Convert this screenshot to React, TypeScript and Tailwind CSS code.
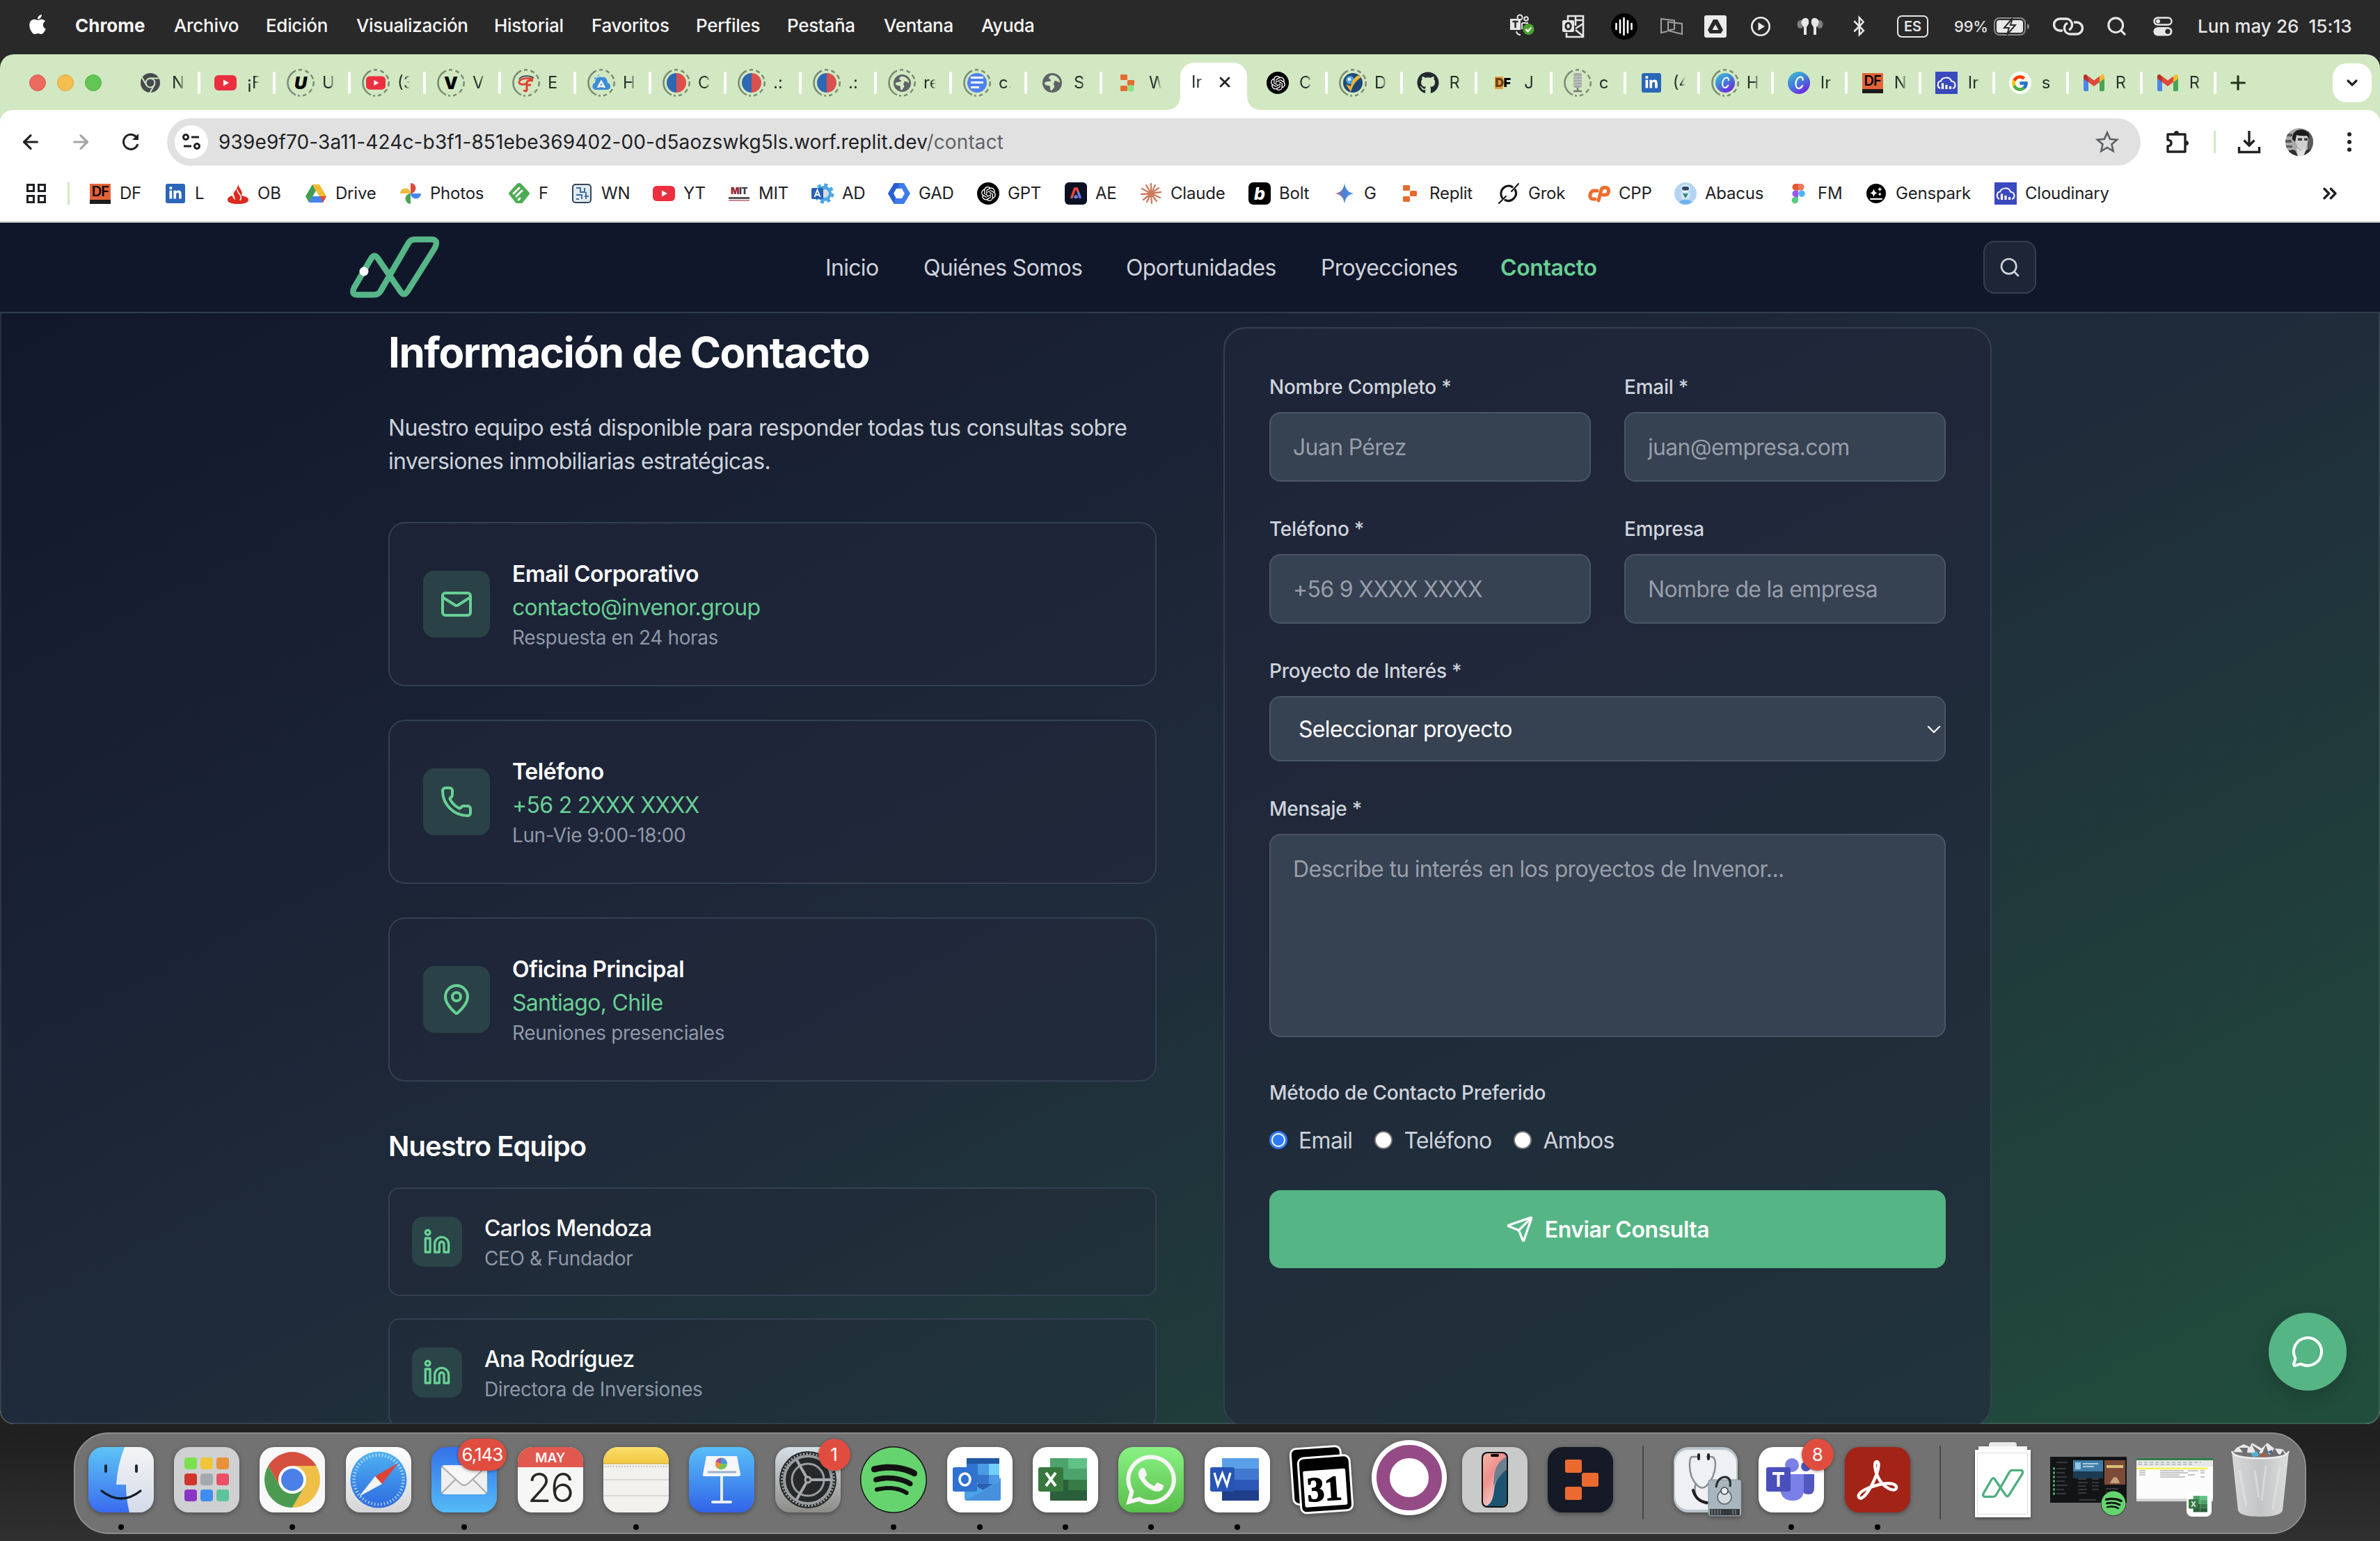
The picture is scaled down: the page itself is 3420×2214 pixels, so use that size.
import React from "react";
import type { ReactNode } from "react";
import {
  ArrowLeft,
  ArrowRight,
  ChevronDown,
  ChevronsRight,
  Linkedin,
  Mail,
  MapPin,
  MessageCircle,
  Phone,
  Plus,
  Search,
  Send,
  X,
} from "lucide-react";
import { FaApple, FaBluetoothB, FaGithub, FaLinkedinIn, FaSpotify, FaWhatsapp } from "react-icons/fa";
import { SiOpenai } from "react-icons/si";
import { FcGoogle } from "react-icons/fc";

/* ---------- brand ---------- */

const LOGO_PATH =
  "M35 84.5H12Q2 84.5 7 74L31 33Q36 24 41.500 33L73 79Q78.500 88 84 79L123 17Q128.500 5 118 5H94Q88 5 85 10L45 79Q42 84.500 35 84.500Z";

function InvenorLogo({ className, stroke = 8.5, dot = true, color = "#56b688" }: { className: string; stroke?: number; dot?: boolean; color?: string }) {
  return (
    <svg viewBox="0 0 130 90" className={className} fill="none">
      <path d={LOGO_PATH} stroke={color} strokeWidth={stroke} strokeLinejoin="round" />
      {dot && <circle cx="21" cy="51" r="6.5" fill="#fff" />}
    </svg>
  );
}

/* ---------- favicons ---------- */

const YouTubeIcon = ({ small = false }: { small?: boolean }) => (
  <svg viewBox="0 0 32 32" className={small ? "size-7" : "size-8"}>
    <rect y="5" width="32" height="22" rx="6" fill="#ec2f3f" />
    <path d="M13 11.500v9l8-4.500z" fill="#fff" />
  </svg>
);
const ChromeGrey = () => (
  <svg viewBox="0 0 28 28" className="size-7">
    <circle cx="14" cy="14" r="14" fill="#474b50" />
    <circle cx="14" cy="14" r="6.500" fill="#474b50" stroke="#d2e8c2" strokeWidth="2" />
    <path d="M14 7.500h12.500M8.400 17.300 2.200 6.600M19.600 17.300 13.500 28" stroke="#d2e8c2" strokeWidth="2" />
  </svg>
);
const GlobeIcon = ({ small = false }: { small?: boolean }) => (
  <svg viewBox="0 0 28 28" className={small ? "size-[25px]" : "size-7"}>
    <circle cx="14" cy="14" r="14" fill="#5f6368" />
    <path d="M13 3c-4 1-5 5-2 6 3 1 0 3-2 3-3 0-6 1-6 2 0 3 3 4 6 4 2 0 2 2 2 4 0 3 2 3 3 3 0-2 3-3 3-6s-2-3-1-4c2-2 0-3 2-4 3 0 5 2 7 3 0-5-4-11-12-11z" fill="#d2e8c2" />
  </svg>
);
const HalfIcon = () => (
  <svg viewBox="0 0 28 28" className="size-7">
    <path d="M14 0a14 14 0 0 0 0 28z" fill="#2d68b2" />
    <path d="M14 0a14 14 0 0 1 0 28z" fill="#dc4f4c" />
  </svg>
);
const DocsCircle = () => (
  <svg viewBox="0 0 28 28" className="size-7">
    <circle cx="14" cy="14" r="14" fill="#4f81ee" />
    <path d="M5 6.500h18M5 13.500h18M5 20.500h12" stroke="#fff" strokeWidth="3" />
  </svg>
);
const ReplitIcon = ({ dot = false }: { dot?: boolean }) => (
  <svg viewBox="0 0 32 32" className="size-8">
    <rect x="6" y="4" width="10" height="8" rx="1.500" fill="#e56b2f" />
    <rect x="16" y="12" width="10" height="8" rx="1.500" fill="#e56b2f" />
    <rect x="6" y="20" width="10" height="8" rx="1.500" fill="#e56b2f" />
    {dot && <circle cx="21" cy="24" r="5" fill="#8be08c" />}
  </svg>
);
const OpenAiIcon = () => (
  <span className="flex size-8 items-center justify-center rounded-full bg-black text-white">
    <SiOpenai size={21} />
  </span>
);
const DfIcon = () => (
  <span className="flex h-[29px] w-[30px] flex-col items-center bg-[#e4643a]">
    <span className="text-[20px] leading-[23px] font-semibold tracking-[-0.04em] text-black">DF</span>
    <span className="h-[6px] w-full bg-[#1d1b1b]" />
  </span>
);
const DfSmall = () => (
  <span className="flex text-[18px] leading-[18px] font-black tracking-[-0.05em]">
    <span className="bg-[#e3a044] text-[#6b3f10]">D</span>
    <span>F</span>
  </span>
);
const LinkedInIcon = () => (
  <span className="flex size-7 items-center justify-center rounded-[3px] bg-[#2a66b8] text-white">
    <FaLinkedinIn size={20} />
  </span>
);
const CanvaIcon = ({ small = false }: { small?: boolean }) => (
  <svg viewBox="0 0 32 32" className={small ? "size-7" : "size-8"}>
    <defs>
      <linearGradient id="canva" x1="0" y1="0" x2=".6" y2="1">
        <stop offset="0" stopColor="#3fc4cf" />
        <stop offset=".5" stopColor="#3f86dc" />
        <stop offset="1" stopColor="#6d2be0" />
      </linearGradient>
    </defs>
    <circle cx="16" cy="16" r="16" fill="url(#canva)" />
    <path d="M21.500 12c.5-3-1-4.500-3-4.500-4 0-7 5-7 10 0 4 2 6.500 4.500 6.500s4-2 5-4" stroke="#fff" strokeWidth="2.200" fill="none" strokeLinecap="round" />
  </svg>
);
const CloudinaryIcon = () => (
  <svg viewBox="0 0 32 32" className="size-8">
    <rect width="32" height="32" fill="#3a49be" />
    <path d="M7 24c-5-2-4-10 1-10.500 1.500-6 13-7 15 0 7 1 7 9 2 10.500" stroke="#fff" strokeWidth="2" fill="none" />
    <path d="M10.500 16.500v8.500M16 19v6M21.500 21v4" stroke="#fff" strokeWidth="3.200" />
  </svg>
);
const GmailIcon = () => (
  <svg viewBox="0 0 30 24" className="h-6 w-[30px]">
    <path d="M0 3v19a2 2 0 0 0 2 2h5V8z" fill="#4b84ec" />
    <path d="M30 3v19a2 2 0 0 1-2 2h-5V8z" fill="#48a455" />
    <path d="M23 3.500V11l7-5V3c0-3-3-4-5-2z" fill="#f2bd2e" />
    <path d="M7 3.500V11L0 6V3c0-3 3-4 5-2z" fill="#b83329" />
    <path d="M7 2.500V11l8 6 8-6V2.500l-8 6z" fill="#dd4a3d" />
  </svg>
);
const GoogleIcon = () => (
  <span className="flex size-8 items-center justify-center rounded-full bg-white">
    <FcGoogle size={27} />
  </span>
);
const MicIcon = () => (
  <svg viewBox="0 0 20 28" className="h-7 w-5">
    <rect x="4" y="0" width="12" height="21" rx="3" fill="#a4a8a4" />
    <path d="M4 5h12M4 9h12M4 13h12M4 17h12" stroke="#d9dcd6" strokeWidth="1.200" />
    <path d="M10 21v4M4 26h12" stroke="#777" strokeWidth="2.500" />
  </svg>
);
const SwirlIcon = () => (
  <svg viewBox="0 0 28 28" className="size-7">
    <circle cx="14" cy="14" r="14" fill="#1e4873" />
    <circle cx="10" cy="10" r="6" fill="#4a9fdc" />
    <circle cx="9" cy="9" r="2.500" fill="#d8f0ff" />
    <path d="M4 16l7 11c3-9 6-15 15-21-2-2-4-3-6-2-5 4-8 8-9 15z" fill="#eeb23c" />
  </svg>
);
const CloudBlue = () => (
  <svg viewBox="0 0 28 28" className="size-7">
    <path d="M6 24c-6 0-6-9-1-10C5 7 11 4 15 6c5-1 8 3 8 8 6 1 5 10 0 10z" fill="#3f8bd8" />
    <path d="M4 6h3v3H4zM9 2h2v2H9zM8 5h2v2H8z" fill="#69b0ea" />
    <path d="M9 21 14 12l5 9M11 19h7" stroke="#fff" strokeWidth="2.500" fill="none" />
  </svg>
);
const RedF = () => (
  <svg viewBox="0 0 28 28" className="size-7" fill="none">
    <path d="M4 9C8 3 18 3 25 7" stroke="#43505a" strokeWidth="2" />
    <path d="M24 9C16 6 5 8 4 13c0 4 7 4 10 2" stroke="#e0402f" strokeWidth="2.800" />
    <path d="M24 11c-5-1-9 0-9 3v11c-2 2-4 0-4-1M14 17h7" stroke="#e0402f" strokeWidth="3" />
  </svg>
);
const BoldU = () => <span className="text-[25px] leading-none font-black text-black italic">U</span>;
const BoldV = () => <span className="text-[25px] leading-none font-black text-black">V</span>;

/* ---------- tab strip ---------- */

function Ring({ children }: { children: ReactNode }) {
  return (
    <span className="relative flex size-10 items-center justify-center">
      <svg viewBox="0 0 40 40" className="absolute inset-0 size-10" fill="none">
        <path d="M13 2.700A18.700 18.700 0 0 0 13 37.300" stroke="#7b8c74" strokeWidth="2.500" />
        <path
          d="M17 1.500a18.700 18.700 0 0 1 5-.1M26.500 2.500a18.700 18.700 0 0 1 5 3M34.500 8.500a18.700 18.700 0 0 1 3.500 6M38.600 18a18.700 18.700 0 0 1-.6 7M36 29a18.700 18.700 0 0 1-4 5M28 36.500a18.700 18.700 0 0 1-5 2M19 38.700a18.700 18.700 0 0 1-3-.4"
          stroke="#7b8c74"
          strokeWidth="2.500"
        />
      </svg>
      {children}
    </span>
  );
}

type TabItem = { icon: ReactNode; text: string; ring?: boolean };

const leftTabs: TabItem[] = [
  { icon: <ChromeGrey />, text: "N" },
  { icon: <YouTubeIcon />, text: "¡F" },
  { icon: <BoldU />, text: "U", ring: true },
  { icon: <YouTubeIcon small />, text: "(3", ring: true },
  { icon: <BoldV />, text: "V", ring: true },
  { icon: <RedF />, text: "E", ring: true },
  { icon: <CloudBlue />, text: "H", ring: true },
  { icon: <HalfIcon />, text: "C", ring: true },
  { icon: <HalfIcon />, text: ".:", ring: true },
  { icon: <HalfIcon />, text: ".:", ring: true },
  { icon: <GlobeIcon small />, text: "re", ring: true },
  { icon: <DocsCircle />, text: "c.", ring: true },
  { icon: <GlobeIcon />, text: "S" },
  { icon: <ReplitIcon dot />, text: "W" },
];

const rightTabs: TabItem[] = [
  { icon: <OpenAiIcon />, text: "C" },
  { icon: <SwirlIcon />, text: "D", ring: true },
  { icon: <FaGithub size={32} color="#24292f" />, text: "R" },
  { icon: <DfSmall />, text: "J" },
  { icon: <MicIcon />, text: "c", ring: true },
  { icon: <LinkedInIcon />, text: "(4" },
  { icon: <CanvaIcon small />, text: "H", ring: true },
  { icon: <CanvaIcon />, text: "Ir" },
  { icon: <DfIcon />, text: "N" },
  { icon: <CloudinaryIcon />, text: "Ir" },
  { icon: <GoogleIcon />, text: "s" },
  { icon: <GmailIcon />, text: "R" },
  { icon: <GmailIcon />, text: "R" },
];

function Tab({ tab, width, divider }: { tab: TabItem; width: string; divider: boolean }) {
  return (
    <div className={`flex h-full shrink-0 items-center pl-[18px] ${width}`}>
      <span className="flex size-10 shrink-0 items-center justify-center">{tab.ring ? <Ring>{tab.icon}</Ring> : tab.icon}</span>
      <span className="ml-[11px] w-[18px] overflow-hidden mask-r-from-60% text-[24px] leading-8 whitespace-nowrap text-[#26302a]">{tab.text}</span>
      {divider && <span className="-mr-0.5 ml-auto h-8 w-1 rounded-sm bg-white" />}
    </div>
  );
}

function TabStrip() {
  return (
    <div className="flex h-20 shrink-0 items-center pt-0.5">
      <div className="flex w-[178px] shrink-0 gap-4 pl-[42px]">
        <span className="size-6 rounded-full border border-[#d65a50] bg-[#ed6a5f]" />
        <span className="size-6 rounded-full border border-[#dca73c] bg-[#f4bf4f]" />
        <span className="size-6 rounded-full border border-[#53b146] bg-[#62c554]" />
      </div>
      {leftTabs.map((t, i) => (
        <Tab key={i} tab={t} width="w-[108px]" divider={i < 13} />
      ))}
      <div className="relative ml-1.5 flex h-[68px] w-24 shrink-0 items-center self-end rounded-t-[20px] bg-white pb-3">
        <svg viewBox="0 0 22 22" className="absolute bottom-0 -left-[22px] size-[22px]">
          <path d="M22 0v22H0Q22 22 22 0z" fill="#fff" />
        </svg>
        <svg viewBox="0 0 22 22" className="absolute -right-[22px] bottom-0 size-[22px]">
          <path d="M0 0v22h22Q0 22 0 0z" fill="#fff" />
        </svg>
        <span className="ml-4 w-[18px] overflow-hidden mask-r-from-60% text-[24px] leading-8 whitespace-nowrap text-[#26302a]">Ir</span>
        <X className="ml-[18px] size-6 text-[#202124]" strokeWidth={2.8} />
      </div>
      <div className="w-1.5 shrink-0" />
      {rightTabs.map((t, i) => (
        <Tab key={i} tab={t} width={i === 0 ? "w-[108px]" : i < 4 ? "w-[107.600px]" : "w-[106px]"} divider />
      ))}
      <Plus className="ml-[17px] size-[32px] text-[#27331f]" strokeWidth={2.400} />
      <div className="mr-3 ml-auto flex size-14 items-center justify-center rounded-[20px] bg-white">
        <ChevronDown className="size-6 text-[#1f2421]" strokeWidth={3.200} />
      </div>
    </div>
  );
}

/* ---------- toolbar ---------- */

function Toolbar() {
  return (
    <div className="flex h-[92px] shrink-0 items-center text-[#202124]">
      <div className="flex w-60 shrink-0 items-center pl-[28px]">
        <ArrowLeft className="size-8" strokeWidth={2.400} />
        <ArrowRight className="ml-10 size-8 text-[#a3a5a7]" strokeWidth={2.400} />
        <svg viewBox="0 0 28 28" className="ml-[42px] size-7" fill="none">
          <path d="M24 17A10.500 10.500 0 1 1 21.500 6.500L24 9" stroke="#202124" strokeWidth="3" />
          <path d="M25 2v9h-9z" fill="#202124" />
        </svg>
      </div>
      <div className="flex h-[68px] w-[2836px] shrink-0 items-center rounded-full bg-[#e1e1e1] pl-[11px]">
        <span className="flex size-12 items-center justify-center rounded-full bg-white">
          <svg viewBox="0 0 28 28" className="size-7" fill="none" stroke="#202124" strokeWidth="3">
            <circle cx="6" cy="7" r="3.500" />
            <path d="M14 7h11M3 20h11" />
            <circle cx="22" cy="20" r="3.500" />
          </svg>
        </span>
        <span className="ml-[15px] text-[28px] leading-9 tracking-[0.005em] text-[#202124]">
          939e9f70-3a11-424c-b3f1-851ebe369402-00-d5aozswkg5ls.worf.replit.dev<span className="text-[#5f6368]">/contact</span>
        </span>
        <svg viewBox="0 0 24 24" className="mr-[30px] ml-auto size-9" fill="none" stroke="#5c5f63" strokeWidth="1.700">
          <path d="m12 3 2.700 6.200 6.700.6-5.100 4.400 1.500 6.600L12 17.300l-5.800 3.500 1.500-6.600-5.100-4.400 6.700-.6z" />
        </svg>
      </div>
      <svg viewBox="0 0 34 34" className="ml-[36px] size-[34px]" fill="none" stroke="#202124" strokeWidth="3.400" strokeLinejoin="round">
        <path d="M3 6h25v25H3v-8q5-.5 5-4.500T3 14z" />
        <path d="M12 5q0-4 3.500-4T19 5zM29 15q4 0 4 3.500T29 22z" fill="#202124" stroke="none" />
      </svg>
      <span className="ml-[35px] h-8 w-[3px] bg-[#d2e8c2]" />
      <svg viewBox="0 0 34 34" className="ml-[31px] size-[34px]" fill="none" stroke="#202124" strokeWidth="3.400">
        <path d="M17 1v20M9.500 14.500 17 22l7.500-7.500M2.500 24v7.500h29V24" />
      </svg>
      <svg viewBox="0 0 40 40" className="ml-[35px] size-10">
        <defs>
          <clipPath id="avatar">
            <circle cx="20" cy="20" r="20" />
          </clipPath>
        </defs>
        <g clipPath="url(#avatar)">
          <rect width="40" height="40" fill="#a9a9a9" />
          <path d="M0 8h10v4H0zM0 17h9v4H0zM0 25h10v3H0zM32 4h8v30h-8z" fill="#5a5a5a" />
          <path d="M0 34q10-4 14-2l4 8H0zM40 30q-8 0-10 2l-4 8h14z" fill="#2e2e2e" />
          <path d="M12 12q1-8 12-8 10 2 9 12l-3 13q-4 5-9 2-6-6-9-19z" fill="#cfcfcf" />
          <path d="M10 16Q10 2 24 2q13 2 10 14l-3-5q-9 1-15-1l-2 10z" fill="#1b1b1b" />
          <path d="M18 14.500h6v3.500h-6zM27 14.500h5v3.500h-5z" fill="#3a3a3a" />
          <path d="m16 28 6 5 8-5-4 12h-8z" fill="#e2e2e2" />
        </g>
      </svg>
      <div className="ml-[49px] flex flex-col gap-[5px]">
        <span className="size-1.5 rounded-full bg-[#202124]" />
        <span className="size-1.5 rounded-full bg-[#202124]" />
        <span className="size-1.5 rounded-full bg-[#202124]" />
      </div>
    </div>
  );
}

/* ---------- bookmarks ---------- */

const bookmarks: { icon: ReactNode; text: string; w: string }[] = [
  { icon: <DfIcon />, text: "DF", w: "w-[108px]" },
  { icon: <LinkedInIcon />, text: "L", w: "w-[90px]" },
  {
    icon: (
      <svg viewBox="0 0 32 32" className="size-8">
        <path d="M17 1c-1 3 0 5 2 8s4 6 2 10c6 1 10 3 10 6 0 4-6 6-15 6S1 29 1 25c0-3 3-5 7-6 0 3 2 4 4 6 0-4-3-6-2-10 1-3 4-3 7-14z" fill="#dc2a1e" />
        <path d="M15 10c-1 4 4 6 5 10 1 2 0 4-1 6" stroke="#fff" strokeWidth="1.500" fill="none" />
      </svg>
    ),
    text: "OB",
    w: "w-[112px]",
  },
  {
    icon: (
      <svg viewBox="0 0 32 32" className="size-8">
        <path d="M11 3h10l10 17H21z" fill="#f3bb2d" />
        <path d="M11 3 1 20l5 9 10-17z" fill="#439d52" />
        <path d="M11 20h20l-5 9H6z" fill="#4583ee" />
        <path d="M26 29l5-9h-9z" fill="#d94c3d" />
      </svg>
    ),
    text: "Drive",
    w: "w-[136px]",
  },
  {
    icon: (
      <svg viewBox="0 0 32 32" className="size-8">
        <path d="M16 16V1a7.500 7.500 0 0 1 0 15z" fill="#da4b3e" />
        <path d="M16 16h15a7.500 7.500 0 0 1-15 0z" fill="#4b84ee" />
        <path d="M16 16v15a7.500 7.500 0 0 1 0-15z" fill="#4ba457" />
        <path d="M16 16H1a7.500 7.500 0 0 1 15 0z" fill="#f0bb3a" />
      </svg>
    ),
    text: "Photos",
    w: "w-[156px]",
  },
  {
    icon: (
      <svg viewBox="0 0 32 32" className="size-8">
        <path d="M16 1q2 0 3 1l11 12q2 2 0 4L22 28q-1 2-3 2h-6q-2 0-3-2L2 18q-2-2 0-4L13 2q1-1 3-1z" fill="#4dab52" />
        <path d="m8 16 8-8M12 20l8-8M15 25l2-2" stroke="#fff" strokeWidth="3" strokeLinecap="round" />
      </svg>
    ),
    text: "F",
    w: "w-[90px]",
  },
  {
    icon: (
      <svg viewBox="0 0 32 32" className="size-8">
        <rect x="3" y="3" width="26" height="26" rx="4" fill="#e3ebf1" stroke="#33475b" strokeWidth="2" />
        <path d="M8 8h6v6h6V8M8 18h8v6M22 14v10M8 24h4M20 20h6" stroke="#3c6ea0" strokeWidth="2" fill="none" />
      </svg>
    ),
    text: "WN",
    w: "w-[118px]",
  },
  { icon: <YouTubeIcon />, text: "YT", w: "w-[108px]" },
  {
    icon: (
      <span className="flex w-8 flex-col items-center">
        <span className="text-[13px] leading-[13px] font-black tracking-[-0.03em] text-[#3b3b3f]">
          <span className="text-[#97283a]">M</span>IT
        </span>
        <span className="mt-0.5 h-[3px] w-[30px] bg-[#555]" />
        <span className="mt-px h-[2px] w-[30px] bg-[#c58a92]" />
      </span>
    ),
    text: "MIT",
    w: "w-[120px]",
  },
  {
    icon: (
      <svg viewBox="0 0 32 32" className="size-8">
        <circle cx="18" cy="16" r="11" fill="#4aa6e2" />
        <circle cx="18" cy="16" r="12.500" fill="none" stroke="#4aa6e2" strokeWidth="4" strokeDasharray="5 4.800" />
        <circle cx="19" cy="16" r="6" fill="#d8dde2" />
        <rect x="0" y="8" width="17" height="16" rx="2" fill="#2762b8" />
        <path d="m4.500 21 4-10 4 10M6 18h5" stroke="#fff" strokeWidth="2" fill="none" />
      </svg>
    ),
    text: "AD",
    w: "w-[110px]",
  },
  {
    icon: (
      <svg viewBox="0 0 32 32" className="size-8">
        <path d="M9 1h14l9 15-9 15H9L0 16z" fill="#3f7bea" />
        <path d="M9 1h8l-6 15-2 15L0 16z" fill="#2a5fd0" />
        <path d="m12 9 8 0 4 7-4 7h-8l-4-7z" fill="#fff" />
      </svg>
    ),
    text: "GAD",
    w: "w-[128px]",
  },
  { icon: <OpenAiIcon />, text: "GPT", w: "w-[126px]" },
  {
    icon: (
      <svg viewBox="0 0 32 32" className="size-8">
        <defs>
          <linearGradient id="ae" x1="0" y1="0" x2="1" y2="1">
            <stop offset="0" stopColor="#ff4b3a" />
            <stop offset=".4" stopColor="#f0443c" />
            <stop offset=".7" stopColor="#4e8ff0" />
            <stop offset="1" stopColor="#9a4cf0" />
          </linearGradient>
        </defs>
        <rect width="32" height="32" rx="6" fill="#0b1022" />
        <path d="m9.500 23 5-14h3l5 14M14 22.500l2-3 2 3" stroke="url(#ae)" strokeWidth="3.600" fill="none" strokeLinejoin="round" />
      </svg>
    ),
    text: "AE",
    w: "w-[108px]",
  },
  {
    icon: (
      <svg viewBox="0 0 32 32" className="size-8" stroke="#cc7c5e" strokeWidth="2.300" strokeLinecap="round">
        <path d="M16 16V2M16 16l6-12M16 16l11-8M16 16l14-2M16 16l13 6M16 16l8 11M16 16l1 14M16 16l-6 12M16 16 5 25M16 16 2 17M16 16 3 9M16 16 9 4" />
      </svg>
    ),
    text: "Claude",
    w: "w-[156px]",
  },
  {
    icon: (
      <span className="flex size-8 items-center justify-center rounded-[7px] bg-black text-[25px] leading-none font-extrabold text-white italic">b</span>
    ),
    text: "Bolt",
    w: "w-[122px]",
  },
  {
    icon: (
      <svg viewBox="0 0 32 32" className="size-8">
        <defs>
          <linearGradient id="gem" x1="0" y1="0" x2="1" y2="0">
            <stop offset="0" stopColor="#c9667a" />
            <stop offset=".45" stopColor="#4d7fd6" />
            <stop offset="1" stopColor="#3f9be8" />
          </linearGradient>
        </defs>
        <path d="M16 1q1.500 13.500 14 15-12.500 1.500-14 15Q14.500 17.500 2 16 14.500 14.500 16 1z" fill="url(#gem)" />
      </svg>
    ),
    text: "G",
    w: "w-[94px]",
  },
  { icon: <ReplitIcon />, text: "Replit", w: "w-[142px]" },
  {
    icon: (
      <svg viewBox="0 0 32 32" className="size-8" fill="none" stroke="#151515" strokeLinecap="round">
        <path d="M21 6.500A11 11 0 0 0 6.500 22M11 25.500A11 11 0 0 0 25.500 11" strokeWidth="3.200" />
        <path d="M30 2 20 13M12 20 2 30" strokeWidth="2" />
      </svg>
    ),
    text: "Grok",
    w: "w-[130px]",
  },
  {
    icon: (
      <svg viewBox="0 0 32 32" className="size-8" fill="none" stroke="#ec6e31" strokeWidth="5" strokeLinecap="round">
        <path d="M13 12H9q-5 0-6 6t5 6h2M15 26l4-15q1-4 6-3.500t4.500 5.500-5 5h-3" />
      </svg>
    ),
    text: "CPP",
    w: "w-[124px]",
  },
  {
    icon: (
      <svg viewBox="0 0 32 32" className="size-8">
        <circle cx="16" cy="16" r="16" fill="#b4d5f2" />
        <path d="M7 29q1-4 9-4t9 4q-4 3-9 3t-9-3z" fill="#6fb2ec" />
        <ellipse cx="16" cy="9" rx="6.500" ry="5.500" fill="#eef3f8" />
        <rect x="11" y="6" width="10" height="5.500" rx="2.500" fill="#2f4964" />
        <path d="M9 15h14l-2 9H11z" fill="#dbe6ef" />
        <path d="M12 16h8l-4 7z" fill="#268c7c" />
      </svg>
    ),
    text: "Abacus",
    w: "w-[162px]",
  },
  {
    icon: (
      <svg viewBox="0 0 32 32" className="size-8">
        <path d="M16 2h-5a5 5 0 0 0 0 9.500h5z" fill="#e4582f" />
        <path d="M16 2h5a5 5 0 0 1 0 9.500h-5z" fill="#ec7a63" />
        <path d="M16 11.500h-5a5 5 0 0 0 0 9.500h5z" fill="#9559f2" />
        <circle cx="21" cy="16.200" r="4.800" fill="#4db5f7" />
        <path d="M16 21h-5a4.700 4.700 0 1 0 5 5z" fill="#57cb86" />
      </svg>
    ),
    text: "FM",
    w: "w-[112px]",
  },
  {
    icon: (
      <svg viewBox="0 0 32 32" className="size-7">
        <circle cx="16" cy="16" r="16" fill="#000" />
        <path d="M12 8q.8 6 6 7-5.200 1-6 7-.8-6-6-7 5.200-1 6-7zM22 5q.5 3.500 4 4-3.500.5-4 4-.5-3.500-4-4 3.500-.5 4-4zM22 14q.3 2.500 3 3-2.700.5-3 3-.3-2.500-3-3 2.700-.5 3-3z" fill="#fff" />
        <path d="M6 25h20" stroke="#fff" strokeWidth="2.500" />
      </svg>
    ),
    text: "Genspark",
    w: "w-[186px]",
  },
  { icon: <CloudinaryIcon />, text: "Cloudinary", w: "w-[180px]" },
];

function BookmarksBar() {
  return (
    <div className="flex h-[68px] shrink-0 items-center pb-3 pl-[38px] text-[#202124]">
      <svg viewBox="0 0 28 28" className="size-7 shrink-0" fill="none" stroke="#202124" strokeWidth="3">
        <path d="M1.500 1.500h9v9h-9zM17.500 1.500h9v9h-9zM1.500 17.500h9v9h-9zM17.500 17.500h9v9h-9z" />
      </svg>
      <span className="mr-7 ml-[31px] h-8 w-[3px] shrink-0 bg-[#d2e8c2]" />
      {bookmarks.map((b) => (
        <div key={b.text} className={`flex shrink-0 items-center gap-3 ${b.w}`}>
          <span className="flex size-8 shrink-0 items-center justify-center">{b.icon}</span>
          <span className="text-[24px] leading-8 font-normal tracking-[-0.009em] whitespace-nowrap">{b.text}</span>
        </div>
      ))}
      <ChevronsRight className="mr-[56px] ml-auto size-8" strokeWidth={2.600} />
    </div>
  );
}

/* ---------- macOS menu bar ---------- */

const menus: { text: string; w: string }[] = [
  { text: "Archivo", w: "w-[132px]" },
  { text: "Edición", w: "w-[130px]" },
  { text: "Visualización", w: "w-[198px]" },
  { text: "Historial", w: "w-[140px]" },
  { text: "Favoritos", w: "w-[150px]" },
  { text: "Perfiles", w: "w-[131px]" },
  { text: "Pestaña", w: "w-[139px]" },
  { text: "Ventana", w: "w-[140px]" },
  { text: "Ayuda", w: "w-[90px]" },
];

function MenuBar() {
  return (
    <div className="flex h-[78px] shrink-0 items-center bg-[#292929] pb-[5px] text-[26px] leading-8 text-[#f6f6f6]">
      <FaApple className="mb-[3px] ml-[38px] text-white" size={32} />
      <span className="ml-[38px] w-[142px] font-bold">Chrome</span>
      {menus.map((m) => (
        <span key={m.text} className={`shrink-0 font-medium tracking-[-0.012em] whitespace-nowrap ${m.w}`}>
          {m.text}
        </span>
      ))}
      <div className="ml-auto flex items-center pt-0.5 text-[#e6e6e6]">
        <svg viewBox="0 0 36 36" className="size-9" fill="none" stroke="#e6e6e6" strokeWidth="2">
          <rect x="1" y="7" width="15" height="16" fill="#e6e6e6" stroke="none" />
          <path d="M4.500 11h8M8.500 11v9" stroke="#292929" strokeWidth="2.500" />
          <circle cx="15" cy="5" r="3.500" />
          <circle cx="24" cy="7" r="2.800" />
          <path d="M18 13h9M18 13v9M10 25q1 5 6 5" />
          <circle cx="27.500" cy="22" r="8" fill="#4ba32f" stroke="none" />
          <path d="m23.500 22 3 3 5-5.500" stroke="#fff" strokeWidth="2.500" />
        </svg>
        <svg viewBox="0 0 34 34" className="ml-[39px] size-[34px]" fill="none" stroke="#e6e6e6" strokeWidth="2.600">
          <path d="M9 8V2h22v30H7v-6M20 2v6h11M20 8v8M20 20l11-7M20 22l11 9" />
          <rect x="1" y="8" width="17" height="17" rx="2" fill="#e6e6e6" stroke="none" />
          <ellipse cx="9.500" cy="16.500" rx="3.600" ry="4.600" stroke="#292929" strokeWidth="3" />
        </svg>
        <svg viewBox="0 0 38 38" className="ml-[37px] size-[38px]">
          <circle cx="19" cy="19" r="19" fill="#000" />
          <path d="M7.500 15v8M13 10v18M18.500 7v24M24 11v17M29.500 15v8" stroke="#fff" strokeWidth="2.600" strokeLinecap="round" />
        </svg>
        <svg viewBox="0 0 32 24" className="ml-[33px] h-6 w-8" fill="none" stroke="#a0a0a0" strokeWidth="2">
          <path d="M20 7V3.500L1 1v20l9-2M11 5.500 31 8v15L11 18zM20 7v9l-9 1.500" />
        </svg>
        <svg viewBox="0 0 32 32" className="ml-[31px] size-8">
          <rect width="32" height="32" rx="3" fill="#ececec" />
          <path d="M13 6h6l8 15-3 5H8l-3-5zM16 13l-4.500 8h9z" fill="#292929" fillRule="evenodd" />
        </svg>
        <svg viewBox="0 0 28 28" className="ml-[35px] size-7" fill="none">
          <circle cx="14" cy="14" r="12.700" stroke="#ececec" strokeWidth="2.600" />
          <path d="M10.500 8v12l9.500-6z" fill="#ececec" />
        </svg>
        <svg viewBox="0 0 38 28" className="ml-[38px] h-7 w-[38px]">
          <ellipse cx="5" cy="11" rx="4.500" ry="6" fill="#7d7d7d" />
          <ellipse cx="33" cy="11" rx="4.500" ry="6" fill="#7d7d7d" />
          <path d="M7 5q3-4 7-3t3 8l-3 5v11h-4V15q-5-5-3-10zM31 5q-3-4-7-3t-3 8l3 5v11h4V15q5-5 3-10z" fill="#e6e6e6" />
        </svg>
        <FaBluetoothB className="ml-[36px]" size={31} />
        <span className="ml-[39px] flex h-8 w-[45px] items-center justify-center rounded-[7px] border-2 border-[#e6e6e6] text-[20px] leading-none font-semibold">ES</span>
        <span className="ml-[37px] w-[57px] text-[22px] font-medium tracking-[-0.01em]">99%</span>
        <svg viewBox="0 0 52 26" className="h-[26px] w-[52px]">
          <rect x="1" y="1" width="44" height="24" rx="7" fill="none" stroke="#8a8a8a" strokeWidth="2" />
          <path d="M48 9v8q3-1 3-4t-3-4z" fill="#8a8a8a" />
          <rect x="4" y="4" width="38" height="18" rx="4" fill="#e9e9e9" />
          <path d="M27 1 15 15h7l-3 10 12-14h-7z" fill="#e9e9e9" stroke="#292929" strokeWidth="2" />
        </svg>
        <svg viewBox="0 0 44 28" className="ml-[33px] h-7 w-11" fill="none" stroke="#e6e6e6" strokeWidth="3.400">
          <path d="M14 20h-4a8.500 8.500 0 0 1 0-17h9a8.500 8.500 0 0 1 4 16" />
          <path d="M30 8h4a8.500 8.500 0 0 1 0 17h-9a8.500 8.500 0 0 1-4-16" />
        </svg>
        <Search className="ml-[32px] size-[31px]" strokeWidth={2.400} />
        <svg viewBox="0 0 28 28" className="ml-[37px] size-7" fill="none">
          <rect x="1.500" y="1.500" width="25" height="10" rx="5" stroke="#e6e6e6" strokeWidth="2.400" />
          <circle cx="7" cy="6.500" r="3" fill="#e6e6e6" />
          <rect x="0.500" y="15" width="27" height="12.500" rx="6.200" fill="#e6e6e6" />
          <circle cx="21" cy="21.200" r="3.600" fill="#292929" />
        </svg>
        <span className="ml-[36px] w-[262px] font-medium tracking-[0.003em] whitespace-pre">Lun may 26  15:13</span>
      </div>
    </div>
  );
}

/* ---------- site ---------- */

function SiteHeader() {
  return (
    <header className="flex h-[130px] shrink-0 items-center border-b-2 border-[#303d4c] bg-[#11172a]">
      <InvenorLogo className="ml-[502px] h-[90px] w-[130px] shrink-0" />
      <nav className="ml-[554px] flex gap-16 pt-0.5 text-[32px] leading-[48px] tracking-[-0.021em] text-[#cdd2dc]">
        <a className="w-[77px] whitespace-nowrap">Inicio</a>
        <a className="w-[227px] whitespace-nowrap">Quiénes Somos</a>
        <a className="w-[216px] whitespace-nowrap">Oportunidades</a>
        <a className="w-[194px] whitespace-nowrap">Proyecciones</a>
        <a className="font-semibold tracking-[-0.012em] whitespace-nowrap text-[#68d094]">Contacto</a>
      </nav>
      <button className="mr-[494px] ml-auto flex size-[76px] items-center justify-center rounded-2xl border-2 border-[#35404f] bg-[#1e2536]">
        <Search className="size-8 text-[#d1d5db]" strokeWidth={2} />
      </button>
    </header>
  );
}

const contacts = [
  { Icon: Mail, title: "Email Corporativo", value: "contacto@invenor.group", note: "Respuesta en 24 horas" },
  { Icon: Phone, title: "Teléfono", value: "+56 2 2XXX XXXX", note: "Lun-Vie 9:00-18:00" },
  { Icon: MapPin, title: "Oficina Principal", value: "Santiago, Chile", note: "Reuniones presenciales" },
];

const team = [
  { name: "Carlos Mendoza", role: "CEO & Fundador" },
  { name: "Ana Rodríguez", role: "Directora de Inversiones" },
];

function ContactInfo() {
  return (
    <section className="w-[1104px] shrink-0">
      <h2 className="text-[60px] leading-[72px] font-bold tracking-[-0.0245em] whitespace-nowrap text-white">Información de Contacto</h2>
      <p className="mt-[49px] text-[32px] leading-[48px] tracking-[-0.021em] text-[#cdd2dc]">
        Nuestro equipo está disponible para responder todas tus consultas sobre
        <br />
        inversiones inmobiliarias estratégicas.
      </p>
      <div className="mt-[63px] flex flex-col gap-12">
        {contacts.map(({ Icon, title, value, note }) => (
          <div key={title} className="flex items-center gap-8 rounded-3xl border-2 border-[#334050] bg-[#21273a]/60 p-12">
            <span className="flex size-24 items-center justify-center rounded-2xl bg-[#2a4247]">
              <Icon className="size-12 text-[#68d094]" strokeWidth={2} />
            </span>
            <div>
              <h3 className="pt-0.5 text-[32px] leading-[46px] font-semibold tracking-[-0.013em] text-white">{title}</h3>
              <p className="pt-0.5 text-[32px] leading-[46px] tracking-[-0.022em] text-[#68d094]">{value}</p>
              <p className="text-[28px] leading-10 tracking-[-0.014em] text-[#8f97a8]">{note}</p>
            </div>
          </div>
        ))}
      </div>
      <h3 className="mt-16 pt-0.5 text-[40px] leading-[54px] font-semibold tracking-[-0.024em] text-white">Nuestro Equipo</h3>
      <div className="mt-8 flex flex-col gap-8">
        {team.map((m) => (
          <div key={m.name} className="flex items-center gap-8 rounded-2xl border-2 border-[#334050] bg-[#21283a]/35 p-8">
            <span className="flex size-[72px] items-center justify-center rounded-2xl bg-[#2a4448]">
              <Linkedin className="size-10 text-[#68d094]" strokeWidth={2} />
            </span>
            <div>
              <h4 className="pt-0.5 text-[32px] leading-[46px] font-medium tracking-[-0.021em] text-white">{m.name}</h4>
              <p className="text-[28px] leading-10 tracking-[-0.013em] text-[#8f97a8]">{m.role}</p>
            </div>
          </div>
        ))}
      </div>
    </section>
  );
}

function Label({ children }: { children: ReactNode }) {
  return <label className="block text-[28px] leading-10 font-medium tracking-[-0.009em] text-[#ced3dc]">{children}</label>;
}

function Field({ label, placeholder }: { label: string; placeholder: string }) {
  return (
    <div className="w-[462px]">
      <Label>{label}</Label>
      <div className="mt-4 flex h-[100px] items-center rounded-2xl border-2 border-[#4a5565] bg-[#364152] px-8 pt-0.5 text-[32px] leading-[48px] tracking-[-0.021em] whitespace-nowrap text-[#979ea9]">
        {placeholder}
      </div>
    </div>
  );
}

function Radio({ label, checked = false }: { label: string; checked?: boolean }) {
  return (
    <span className="flex items-center gap-4 text-[32px] leading-[46px] tracking-[-0.021em] text-[#cdd2dc]">
      <span
        className={
          checked
            ? "flex size-[26px] items-center justify-center rounded-full border-[3px] border-[#2f7bf6] bg-white"
            : "size-[26px] rounded-full border-2 border-[#7a7a7a] bg-white"
        }
      >
        {checked && <span className="size-4 rounded-full bg-[#2f7bf6]" />}
      </span>
      <span className="pt-0.5">{label}</span>
    </span>
  );
}

function ContactForm() {
  return (
    <section className="h-[1580px] w-[1104px] shrink-0 rounded-[32px] border-2 border-[#334050] bg-[#21273a]/60 p-16">
      <div className="flex justify-between">
        <Field label="Nombre Completo *" placeholder="Juan Pérez" />
        <Field label="Email *" placeholder="juan@empresa.com" />
      </div>
      <div className="mt-12 flex justify-between">
        <Field label="Teléfono *" placeholder="+56 9 XXXX XXXX" />
        <Field label="Empresa" placeholder="Nombre de la empresa" />
      </div>
      <div className="mt-12">
        <Label>Proyecto de Interés *</Label>
        <div className="mt-4 flex h-[94px] items-center justify-between rounded-2xl border-2 border-[#4a5565] bg-[#364152] pt-0.5 pr-1 pl-10 text-[32px] leading-[48px] tracking-[-0.021em] text-white">
          Seleccionar proyecto
          <svg viewBox="0 0 22 14" className="h-[14px] w-[22px]" fill="none">
            <path d="m3 3 8 8 8-8" stroke="#fff" strokeWidth="2.400" strokeLinecap="round" strokeLinejoin="round" />
          </svg>
        </div>
      </div>
      <div className="mt-12">
        <Label>Mensaje *</Label>
        <div className="mt-4 h-[292px] rounded-2xl border-2 border-[#4a5565] bg-[#364152] px-8 pt-[25px] text-[32px] leading-[48px] tracking-[-0.021em] text-[#979ea9]">
          Describe tu interés en los proyectos de Invenor...
        </div>
      </div>
      <div className="mt-[60px]">
        <Label>Método de Contacto Preferido</Label>
        <div className="mt-6 flex gap-8">
          <Radio label="Email" checked />
          <Radio label="Teléfono" />
          <Radio label="Ambos" />
        </div>
      </div>
      <button className="mt-12 flex h-28 w-full items-center justify-center gap-4 rounded-2xl bg-[#56b585] text-[32px] leading-[46px] font-semibold tracking-[-0.014em] text-white">
        <Send className="size-10" strokeWidth={2} />
        <span className="pt-0.5">Enviar Consulta</span>
      </button>
    </section>
  );
}

function Site() {
  return (
    <div className="relative flex min-h-0 flex-1 flex-col overflow-hidden rounded-b-[20px] bg-linear-[to_bottom_right,#10162a_0%,#1f2a3a_50%,#214e3c_100%] shadow-[inset_0_0_0_2px_rgba(255,255,255,0.1)]">
      <SiteHeader />
      <main className="flex min-h-0 flex-1 items-start gap-24 overflow-hidden pt-5 pl-[558px]">
        <ContactInfo />
        <ContactForm />
      </main>
      <button className="absolute right-12 bottom-12 flex size-28 items-center justify-center rounded-full bg-[#56b585] text-white shadow-[0_10px_24px_rgba(0,0,0,0.15)]">
        <MessageCircle className="size-12" strokeWidth={2} />
      </button>
    </div>
  );
}

/* ---------- dock ---------- */

function Tile({ children }: { children: ReactNode }) {
  return (
    <svg viewBox="0 0 94 94" className="size-[94px] overflow-visible drop-shadow-[0_2px_3px_rgba(0,0,0,0.35)]">
      {children}
    </svg>
  );
}

const FinderIcon = () => (
  <Tile>
    <defs>
      <linearGradient id="fb" x1="0" y1="0" x2="0" y2="1">
        <stop offset="0" stopColor="#5ec4f6" />
        <stop offset="1" stopColor="#3a6bee" />
      </linearGradient>
      <linearGradient id="fw" x1="0" y1="0" x2="0" y2="1">
        <stop offset="0" stopColor="#f4f4f5" />
        <stop offset="1" stopColor="#d3dbe8" />
      </linearGradient>
      <clipPath id="fc">
        <rect width="94" height="94" rx="21" />
      </clipPath>
    </defs>
    <g clipPath="url(#fc)">
      <rect width="94" height="94" fill="url(#fb)" />
      <path d="M52 0Q42 25 40 54h14q0 20 5 40h35V0z" fill="url(#fw)" />
    </g>
    <path d="M25 27v8M69 27v8" stroke="#1d2733" strokeWidth="4" strokeLinecap="round" />
    <path d="M19 63q28 22 56 0" stroke="#111b26" strokeWidth="3.200" fill="none" strokeLinecap="round" />
  </Tile>
);

const padColors = ["#7ae04f", "#f2c63b", "#e8903a", "#cf352b", "#a3a9ad", "#ea4f66", "#8b35c6", "#3f8df0", "#5dc39a"];
const LaunchpadIcon = () => (
  <Tile>
    <rect width="94" height="94" rx="21" fill="#cfd0d1" />
    {padColors.map((c, i) => (
      <rect key={c} x={15 + (i % 3) * 23} y={15 + Math.floor(i / 3) * 23} width="18" height="17" rx="4" fill={c} />
    ))}
  </Tile>
);
const ChromeIcon = () => (
  <Tile>
    <rect width="94" height="94" rx="21" fill="#f8f8f8" />
    <path d="M12.400 27A40 40 0 0 1 81.600 27L47 27L29.700 57Z" fill="#d5503f" />
    <path d="M81.600 27A40 40 0 0 1 47 87L64.300 57L47 27Z" fill="#f0bf47" />
    <path d="M47 87A40 40 0 0 1 12.400 27L29.700 57L64.300 57Z" fill="#4c9a50" />
    <circle cx="47" cy="47" r="20" fill="#fff" />
    <circle cx="47" cy="47" r="16" fill="#4a80e8" />
  </Tile>
);
const SafariIcon = () => (
  <Tile>
    <defs>
      <linearGradient id="sf" x1="0" y1="0" x2="0" y2="1">
        <stop offset="0" stopColor="#4fb2f2" />
        <stop offset="1" stopColor="#2d6ae0" />
      </linearGradient>
      <linearGradient id="sfw" x1="0" y1="0" x2="0" y2="1">
        <stop offset="0" stopColor="#ffffff" />
        <stop offset="1" stopColor="#d5d5d7" />
      </linearGradient>
    </defs>
    <rect width="94" height="94" rx="21" fill="url(#sfw)" />
    <circle cx="47" cy="47" r="40.500" fill="url(#sf)" />
    <circle cx="47" cy="47" r="35.500" fill="none" stroke="#d7ecfb" strokeWidth="4.500" strokeDasharray="1.200 3.450" />
    <path d="M75 23 52 53 42 42z" fill="#dd4437" />
    <path d="M19 71 42 42 52 53z" fill="#f3f4f6" />
  </Tile>
);
const MailAppIcon = () => (
  <Tile>
    <defs>
      <linearGradient id="ml" x1="0" y1="0" x2="0" y2="1">
        <stop offset="0" stopColor="#3472ea" />
        <stop offset="1" stopColor="#55bbf7" />
      </linearGradient>
    </defs>
    <rect width="94" height="94" rx="21" fill="url(#ml)" />
    <rect x="14" y="26" width="66" height="42" rx="5" fill="#efefef" />
    <path d="m15 66 22-22M79 66 57 44" stroke="#a8a8a8" strokeWidth="1.800" />
    <path d="m15 28 26 24q6 6 12 0l26-24" fill="#f7f7f7" stroke="#a8a8a8" strokeWidth="1.800" />
  </Tile>
);
const CalendarIcon = () => (
  <div className="flex size-[94px] flex-col items-center overflow-hidden rounded-[21px] bg-[#f6f6f5] drop-shadow-[0_2px_3px_rgba(0,0,0,0.35)]">
    <span className="h-[29px] w-full bg-[#e1584f] text-center text-[19px] leading-[31px] font-semibold text-white">MAY</span>
    <span className="text-[57px] leading-[59px] font-light tracking-[-0.03em] text-[#272727]">26</span>
  </div>
);
const NotesIcon = () => (
  <Tile>
    <defs>
      <linearGradient id="nt" x1="0" y1="0" x2="0" y2="1">
        <stop offset="0" stopColor="#f9de69" />
        <stop offset="1" stopColor="#f3c63f" />
      </linearGradient>
      <clipPath id="nc">
        <rect width="94" height="94" rx="21" />
      </clipPath>
    </defs>
    <g clipPath="url(#nc)">
      <rect width="94" height="94" fill="#f2f1ee" />
      <rect width="94" height="24" fill="url(#nt)" />
      <path d="M0 24h94" stroke="#c4a344" strokeWidth="1" />
      <path d="M2 28h92" stroke="#b4b2ae" strokeWidth="2" strokeDasharray="1.500 2.500" />
      <path d="M0 47h94M0 70h94" stroke="#cfcecb" strokeWidth="1.600" />
    </g>
  </Tile>
);
const KeynoteIcon = () => (
  <Tile>
    <defs>
      <linearGradient id="kn" x1="0" y1="0" x2="0" y2="1">
        <stop offset="0" stopColor="#58bff8" />
        <stop offset="1" stopColor="#3263e8" />
      </linearGradient>
    </defs>
    <rect width="94" height="94" rx="21" fill="url(#kn)" />
    <path d="M25 13h44l5 26q0 3-3 3H22q-3 0-2-3z" fill="#f5f6f8" />
    <path d="M27 36h41" stroke="#9db1c9" strokeWidth="3" />
    <circle cx="46.500" cy="24" r="8.500" fill="#79c257" />
    <path d="M46.500 24v-8.500a8.500 8.500 0 0 0-8 6z" fill="#b84da8" />
    <path d="M46.500 24l-8-3a8.500 8.500 0 0 0 3 10z" fill="#ee8f35" />
    <path d="M46.500 24v-8.500A8.500 8.500 0 0 1 55 24z" fill="#3f9ae0" />
    <rect x="45" y="42" width="4" height="36" fill="#e8ecf2" />
    <rect x="32" y="77" width="30" height="4" rx="2" fill="#e8ecf2" />
  </Tile>
);
const SettingsIcon = () => (
  <Tile>
    <defs>
      <linearGradient id="st" x1="0" y1="0" x2="0" y2="1">
        <stop offset="0" stopColor="#d5e0e7" />
        <stop offset="1" stopColor="#8d8c87" />
      </linearGradient>
    </defs>
    <rect width="94" height="94" rx="21" fill="url(#st)" />
    <circle cx="47" cy="47" r="41" fill="#262829" />
    <circle cx="47" cy="47" r="34" fill="none" stroke="#9a9ea0" strokeWidth="4" />
    <circle cx="47" cy="47" r="37.500" fill="none" stroke="#9a9ea0" strokeWidth="3" strokeDasharray="2.400 2.300" />
    <circle cx="47" cy="47" r="23" fill="none" stroke="#9a9ea0" strokeWidth="3" />
    <path d="M47 47h32M47 47 31 19M47 47 31 75" stroke="#a6aaac" strokeWidth="4" />
    <circle cx="47" cy="47" r="4" fill="#2b2d2e" stroke="#a6aaac" strokeWidth="3" />
  </Tile>
);
const SpotifyIcon = ({ small = false }: { small?: boolean }) => (
  <span className={small ? "flex size-9 items-center justify-center rounded-full bg-[#121212]" : "flex size-[96px] items-center justify-center rounded-full bg-[#121212]"}>
    <FaSpotify className="text-[#65d46e]" size={small ? 36 : 96} />
  </span>
);

const OutlookIcon = () => (
  <Tile>
    <rect width="94" height="94" rx="21" fill="#fff" />
    <path d="M28 16h47v14H28z" fill="#2257a4" />
    <path d="M28 24h16v28H28z" fill="#2f73cd" />
    <path d="M44 24h16v18H44z" fill="#4a9be4" />
    <path d="M60 24h15v18H60z" fill="#71cffb" />
    <path d="M44 40h16v20H44z" fill="#3576cc" />
    <path d="M60 40h15v20H60z" fill="#4a9be4" />
    <path d="M25 44l26 18 26-18v30q0 3-3 3H28q-3 0-3-3z" fill="#4da1e6" />
    <path d="M38 53h28L51 62z" fill="#2a5fae" />
    <path d="M27 77h47q3 0 3-3V48z" fill="#4690de" />
    <rect x="8" y="29" width="35" height="35" rx="3" fill="#2f72cf" />
    <ellipse cx="25.500" cy="46.500" rx="7.500" ry="8.500" fill="none" stroke="#fff" strokeWidth="3.600" />
  </Tile>
);
const ExcelIcon = ({ small = false }: { small?: boolean }) => (
  <svg viewBox="0 0 94 94" className={small ? "size-9" : "size-[94px] drop-shadow-[0_2px_3px_rgba(0,0,0,0.35)]"}>
    <rect width="94" height="94" rx="21" fill="#fff" />
    <path d="M25 16h26v31H25z" fill="#4ea26c" />
    <path d="M51 16h27v15H51z" fill="#62c187" />
    <path d="M51 31h27v16H51z" fill="#4da36c" />
    <path d="M25 47h26v30H25z" fill="#2b5e3a" />
    <path d="M51 47h27v15H51z" fill="#377b47" />
    <path d="M51 62h27v15H51z" fill="#2b5e3a" />
    <rect x="8" y="29" width="36" height="35" rx="3" fill="#37783f" />
    <path d="m19 37 14 19M33 37 19 56" stroke="#fff" strokeWidth="4" />
  </svg>
);
const WhatsAppIcon = () => (
  <span className="flex size-[94px] items-center justify-center rounded-[21px] bg-linear-to-b from-[#89f283] to-[#58be4b] text-[#f6f6f6] drop-shadow-[0_2px_3px_rgba(0,0,0,0.35)]">
    <FaWhatsapp size={82} />
  </span>
);
const WordIcon = () => (
  <Tile>
    <rect width="94" height="94" rx="21" fill="#fff" />
    <path d="M25 16h53v15H25z" fill="#5aa0e8" />
    <path d="M25 31h53v16H25z" fill="#4179cf" />
    <path d="M25 47h53v15H25z" fill="#2a57b8" />
    <path d="M25 62h53v15H25z" fill="#1f3f8c" />
    <rect x="8" y="29" width="35" height="35" rx="3" fill="#2755b5" />
    <path d="m14 37 5 18 6.500-17L32 55l5-18" stroke="#fff" strokeWidth="3.200" fill="none" />
  </Tile>
);
const Notion31Icon = () => (
  <Tile>
    <g transform="rotate(-4 47 47)">
      <rect x="3" y="0" width="72" height="80" rx="8" fill="#000" stroke="#fff" strokeWidth="3" />
      <rect x="13" y="14" width="74" height="79" rx="8" fill="#000" stroke="#fff" strokeWidth="3" />
      <rect x="19" y="33" width="61" height="52" rx="2" fill="#fff" />
    </g>
    <text x="49" y="77" textAnchor="middle" transform="rotate(-4 47 60)" className="font-['Liberation_Serif',serif] text-[50px] font-bold" fill="#000" stroke="#000" strokeWidth="1.500">
      31
    </text>
  </Tile>
);
const RingAppIcon = () => (
  <span className="mb-1.5 flex size-[108px] items-center justify-center rounded-full bg-white drop-shadow-[0_3px_4px_rgba(0,0,0,0.35)]">
    <span className="size-[94px] rounded-full border-[19px] border-[#954b86] bg-white" />
  </span>
);
const PhoneMirrorIcon = () => (
  <Tile>
    <defs>
      <linearGradient id="ph" x1="0" y1="0" x2=".6" y2="1">
        <stop offset="0" stopColor="#f3b8a2" />
        <stop offset=".45" stopColor="#ef8f8e" />
        <stop offset="1" stopColor="#f2d6d2" />
      </linearGradient>
    </defs>
    <rect width="94" height="94" rx="21" fill="#c9caca" />
    <rect x="28" y="7" width="38" height="80" rx="8" fill="#111" />
    <rect x="30" y="9" width="34" height="76" rx="6.500" fill="url(#ph)" />
    <path d="M64 32Q48 42 46 62T34 85h23q7 0 7-7z" fill="#1c5573" />
    <path d="M64 14Q48 22 46 42l-1 14Q54 40 64 32z" fill="#6b7f8f" />
    <rect x="41" y="10" width="12" height="4" rx="2" fill="#000" />
  </Tile>
);
const ReplitAppIcon = () => (
  <Tile>
    <rect width="94" height="94" rx="21" fill="#161a26" />
    <rect x="25" y="18" width="24" height="19" rx="3" fill="#ec6a30" />
    <rect x="49" y="37" width="24" height="20" rx="3" fill="#ec6a30" />
    <rect x="25" y="57" width="24" height="19" rx="3" fill="#ec6a30" />
  </Tile>
);
const DiskUtilityIcon = () => (
  <Tile>
    <rect x="1" y="0" width="92" height="94" rx="21" fill="#b9c3cb" />
    <rect x="3" y="4" width="88" height="86" rx="19" fill="#eef0f3" />
    <path d="M35 14h-7q-4 0-4 12 0 18 10 28 7 8 14 2 12-12 13-30 0-12-6-12h-7M33 52q-4 10 2 22l14 8" fill="none" stroke="#8c9094" strokeWidth="2.600" />
    <path d="M37 11v6M51 11v6" stroke="#222" strokeWidth="4" strokeLinecap="round" />
    <path d="M29 62q4 16 20 18" fill="none" stroke="#1e1f20" strokeWidth="4" strokeLinecap="round" />
    <rect x="51" y="47" width="47" height="52" rx="3" fill="#a9b6be" stroke="#7d8b94" />
    <path d="M53 89h43v9H53z" fill="#35393c" />
    <path d="M56 90v7M60 90v7M64 90v7M68 90v7M86 90v7M90 90v7" stroke="#8a8f93" strokeWidth="1.200" />
    <circle cx="74" cy="72" r="10" fill="#d7dde1" stroke="#6d7a83" strokeWidth="2" />
    <circle cx="74" cy="63" r="5" fill="#eceff1" stroke="#43484c" strokeWidth="1.600" />
    <path d="M62 58q2-15 14-15 8 2 6 14" fill="none" stroke="#2a2c2e" strokeWidth="3" />
  </Tile>
);
const TeamsIcon = () => (
  <Tile>
    <rect width="94" height="94" rx="21" fill="#fff" />
    <circle cx="48" cy="26" r="10" fill="#7b80e6" />
    <circle cx="68" cy="28" r="7" fill="#4f56be" />
    <path d="M62 39h18v20q0 9-8 9-10 0-10-9z" fill="#5158c2" />
    <path d="M31 39h34v22q0 16-16 16T31 61z" fill="#7a80e8" />
    <rect x="11" y="29" width="35" height="35" rx="3" fill="#4a4fbb" />
    <path d="M20 38h17M28.500 38v19" stroke="#fff" strokeWidth="4" />
  </Tile>
);
const AcrobatIcon = () => (
  <Tile>
    <rect width="94" height="94" rx="21" fill="#a32317" />
    <path d="M20 72c-3-8 18-16 34-19 12-2 21 0 20 6-3 7-19-1-26-15-5-10-7-23-2-23 6 1 0 19-5 29-6 13-17 29-21 22z" fill="none" stroke="#fff" strokeWidth="4.400" strokeLinejoin="round" />
  </Tile>
);
const DocStackIcon = () => (
  <div className="flex w-20 flex-col items-center drop-shadow-[0_2px_2px_rgba(0,0,0,0.4)]">
    <span className="h-[6px] w-10 rounded-t-sm bg-[#e9e9e9]" />
    <span className="h-[5px] w-[70px] bg-[#fafafa] shadow-[0_1px_0_#ccc]" />
    <div className="flex h-[97px] w-20 items-center justify-center bg-white">
      <div className="flex h-[89px] w-[73px] items-center justify-center border border-[#ddd]">
        <InvenorLogo className="h-[43px] w-[62px]" dot={false} stroke={7} color="#4fae7f" />
      </div>
    </div>
  </div>
);
const SpotifyWindow = () => (
  <div className="relative w-[110px]">
    <svg viewBox="0 0 110 66" className="h-[66px] w-[110px]">
      <rect width="110" height="66" fill="#131415" />
      <rect x="33" y="5" width="43" height="16" fill="#3f7ca8" />
      <rect x="33" y="21" width="43" height="10" fill="#1c3a50" />
      <rect x="36" y="8" width="8" height="10" fill="#8ec4e6" />
      <path d="M47 10h22M47 14h16" stroke="#d5e8f4" strokeWidth="1.600" />
      <rect x="78" y="5" width="30" height="35" fill="#7d4a39" />
      <path d="M81 14h24" stroke="#d8c27c" strokeWidth="4" />
      <path d="M86 38q8-18 14 0z" fill="#caa07e" />
      <path d="M4 17h3M4 23h3M4 29h3M4 35h3M4 41h3M4 47h3M4 53h3" stroke="#4fa06c" strokeWidth="3.400" />
      <path d="M9 8h16M9 17h14M9 23h12M9 29h15M9 35h12M9 41h16M9 47h11M9 53h14M40 32h12M40 37h14M40 42h11M40 47h13M40 52h12M60 32h10M60 37h10M60 42h10M60 47h10M80 46h18M80 51h12M42 62h24" stroke="#5d6163" strokeWidth="1.200" />
    </svg>
    <span className="absolute right-[1px] -bottom-[19px]">
      <SpotifyIcon small />
    </span>
  </div>
);
const ExcelWindow = () => (
  <div className="relative w-[110px]">
    <svg viewBox="0 0 110 62" className="h-[62px] w-[110px]">
      <rect width="110" height="62" fill="#fcfcfc" />
      <rect width="110" height="3" fill="#2f7d4a" />
      <rect y="3" width="110" height="9" fill="#e7e8e7" />
      <path d="M3 6h90M3 9h80" stroke="#b2b7b5" strokeWidth="1.500" strokeDasharray="5 3" />
      <rect y="13.500" width="102" height="2.500" fill="#f3ef4f" />
      <path d="M4 18h9M34 18h34M74 18h14M92 18h6M4 21h9M34 21h40M92 21h6M4 24h9M34 24h28M74 24h10M34 27h36M92 27h6" stroke="#8d8d8d" strokeWidth="1.200" />
      <path d="M0 60h110" stroke="#ccc" strokeWidth="3" />
    </svg>
    <span className="absolute right-[2px] -bottom-[22px]">
      <ExcelIcon small />
    </span>
  </div>
);
const TrashIcon = () => (
  <svg viewBox="0 0 84 108" className="h-[108px] w-[84px]">
    <defs>
      <linearGradient id="tr" x1="0" y1="0" x2="1" y2="0">
        <stop offset="0" stopColor="#d8d9da" />
        <stop offset=".5" stopColor="#c3c4c5" />
        <stop offset="1" stopColor="#dcdddd" />
      </linearGradient>
    </defs>
    <path d="M3 14 8 8 18 3l9 4 3-6 14 8 8-8 10 8 12 1 7 8z" fill="#e9e9e9" />
    <path d="m12 8 10 14 2-14zM30 4l8 16 4-8zM50 4l-8 18 12-6zM62 8l-6 14 14-2zM74 12l-4 8 8-2z" fill="#6e6e6e" />
    <path d="m29 16 8-3 3 6-8 3z" fill="#4fb3d8" />
    <path d="m42 20 7-5 2 7z" fill="#c0553a" />
    <path d="m52 14 7-3 1 7z" fill="#49648c" />
    <path d="M1 13q3 10 41 10t41-10l-9 85q-3 9-32 9T10 98z" fill="url(#tr)" />
    <path d="M1 13q3 10 41 10t41-10" fill="none" stroke="#f0f0f0" strokeWidth="2.500" />
    <path d="M12 40 22 92M70 36 60 96M34 40l6 40M50 34l-6 50" stroke="#eaeaea" strokeWidth="3" opacity=".5" />
  </svg>
);

function DockItem({ children, running = false, badge, wide = false }: { children: ReactNode; running?: boolean; badge?: string; wide?: boolean }) {
  return (
    <div className="relative flex h-full w-[123.400px] shrink-0 items-center justify-center pb-[10px]">
      {children}
      {running && <span className="absolute bottom-1 size-2 rounded-full bg-black" />}
      {badge && (
        <span
          className={
            wide
              ? "absolute top-[7px] right-[1px] flex h-[46px] w-[70px] items-center justify-center rounded-full bg-[#e04d3f] text-[26px] leading-none tracking-[-0.04em] text-white shadow-[0_1px_4px_rgba(0,0,0,0.4)]"
              : "absolute top-[7px] right-[1px] flex size-[46px] items-center justify-center rounded-full bg-[#e04d3f] text-[26px] leading-none text-white shadow-[0_1px_4px_rgba(0,0,0,0.4)]"
          }
        >
          {badge}
        </span>
      )}
    </div>
  );
}

function DockDivider({ width }: { width: string }) {
  return (
    <div className={`flex h-full shrink-0 items-center justify-center pb-[2px] ${width}`}>
      <span className="h-[106px] w-0.5 bg-[#484848]" />
    </div>
  );
}

function Dock() {
  return (
    <div className="mt-3 ml-[106px] flex h-[146px] w-[3208px] items-center rounded-[50px] border-2 border-[#8e8e8e] bg-[#727272] pl-1">
      <DockItem running><FinderIcon /></DockItem>
      <DockItem><LaunchpadIcon /></DockItem>
      <DockItem running><ChromeIcon /></DockItem>
      <DockItem><SafariIcon /></DockItem>
      <DockItem running badge="6,143" wide><MailAppIcon /></DockItem>
      <DockItem><CalendarIcon /></DockItem>
      <DockItem running><NotesIcon /></DockItem>
      <DockItem><KeynoteIcon /></DockItem>
      <DockItem badge="1"><SettingsIcon /></DockItem>
      <DockItem running><SpotifyIcon /></DockItem>
      <DockItem running><OutlookIcon /></DockItem>
      <DockItem running><ExcelIcon /></DockItem>
      <DockItem running><WhatsAppIcon /></DockItem>
      <DockItem running><WordIcon /></DockItem>
      <DockItem><Notion31Icon /></DockItem>
      <DockItem><RingAppIcon /></DockItem>
      <DockItem><PhoneMirrorIcon /></DockItem>
      <DockItem><ReplitAppIcon /></DockItem>
      <DockDivider width="w-[56px]" />
      <DockItem><DiskUtilityIcon /></DockItem>
      <DockItem running badge="8"><TeamsIcon /></DockItem>
      <DockItem running><AcrobatIcon /></DockItem>
      <DockDivider width="w-[57px]" />
      <DockItem><DocStackIcon /></DockItem>
      <DockItem><SpotifyWindow /></DockItem>
      <DockItem><ExcelWindow /></DockItem>
      <DockItem><TrashIcon /></DockItem>
    </div>
  );
}

export default function App() {
  return (
    <div className="flex h-[2214px] w-[3420px] flex-col overflow-hidden bg-linear-to-b from-[#292929] from-90% via-[#1f1f1f] via-93% to-[#303030] font-['Inter',sans-serif]">
      <MenuBar />
      <div className="flex h-[1968px] shrink-0 flex-col overflow-hidden rounded-[20px] bg-[#d2e8c2]">
        <TabStrip />
        <div className="flex h-[162px] shrink-0 flex-col rounded-t-[18px] border-b-2 border-[#cccccc] bg-white">
          <Toolbar />
          <BookmarksBar />
        </div>
        <Site />
      </div>
      <Dock />
    </div>
  );
}
